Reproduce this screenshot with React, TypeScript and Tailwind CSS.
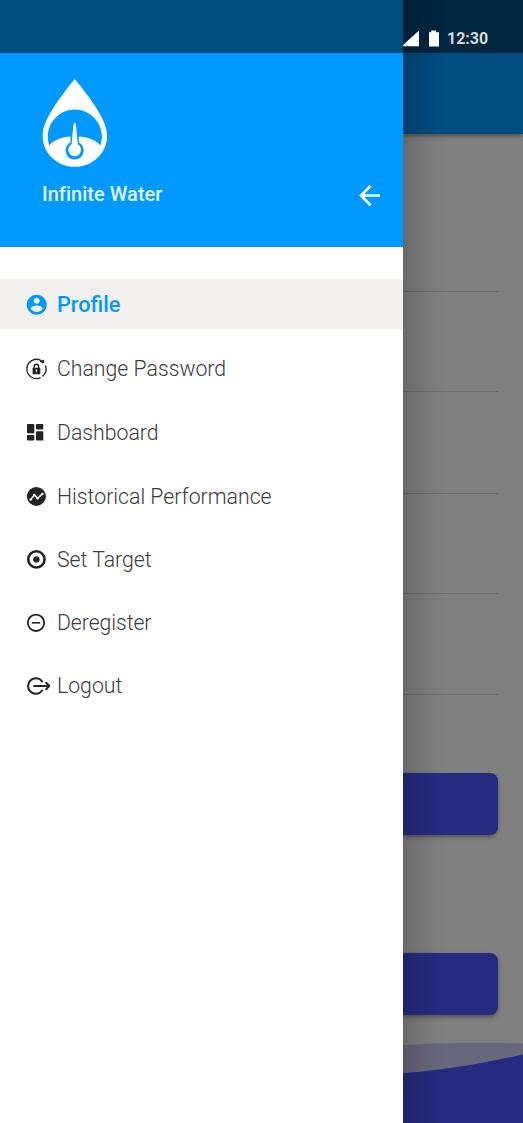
import type { ReactNode } from "react";

function Icon({ children, className = "" }: { children: ReactNode; className?: string }) {
  return (
    <svg viewBox="0 0 28 28" className={`h-7 w-7 shrink-0 ${className}`} fill="none">
      {children}
    </svg>
  );
}

const ink = "#232323";

const icons = {
  profile: (
    <Icon>
      <path
        fill="#0398ff"
        transform="translate(2.7 2.7)"
        d="M12 2C6.48 2 2 6.48 2 12s4.48 10 10 10 10-4.48 10-10S17.52 2 12 2zm0 3c1.66 0 3 1.34 3 3s-1.34 3-3 3-3-1.34-3-3 1.34-3 3-3zm0 14.2c-2.5 0-4.71-1.28-6-3.22.03-1.99 4-3.08 6-3.08 1.99 0 5.97 1.09 6 3.08-1.29 1.94-3.5 3.22-6 3.22z"
      />
    </Icon>
  ),
  password: (
    <Icon>
      <path d="M19.2 5.6A9.6 9.6 0 1 0 18.6 22.6" stroke={ink} strokeWidth="1.3" />
      <path d="M20.4 21.5A9.6 9.6 0 0 0 23.4 10.6" stroke={ink} strokeWidth="1.3" />
      <path d="M18.2 6.6L21.4 5L21.6 8Z" fill={ink} stroke={ink} strokeWidth="1" />
      <rect x="10.6" y="12.8" width="7.7" height="6.5" rx="0.7" fill={ink} />
      <path d="M12.2 13.3V11.5a2.2 2.2 0 0 1 4.4 0V13.3" stroke={ink} strokeWidth="1.4" />
      <path d="M14.4 14.6v2.8M13.6 15.2h1.6" stroke="white" strokeWidth="0.9" />
    </Icon>
  ),
  dashboard: (
    <Icon>
      <g fill={ink}>
        <rect x="5" y="6" width="7.3" height="9.2" rx="0.8" />
        <rect x="14" y="6" width="7.3" height="5.4" rx="0.8" />
        <rect x="5" y="17.1" width="7.3" height="5.5" rx="0.8" />
        <rect x="14" y="13.3" width="7.3" height="9.3" rx="0.8" />
      </g>
    </Icon>
  ),
  history: (
    <Icon>
      <circle cx="14.4" cy="14.4" r="9.5" fill={ink} />
      <path d="M8.7 17.6L12.3 13L15.6 16.3L20.4 11.9" stroke="white" strokeWidth="1.5" />
      <g fill="white">
        <circle cx="8.7" cy="17.6" r="1.2" />
        <circle cx="12.3" cy="13" r="1.2" />
        <circle cx="15.6" cy="16.3" r="1.2" />
        <circle cx="20.4" cy="11.9" r="1.2" />
      </g>
    </Icon>
  ),
  target: (
    <Icon>
      <circle cx="14.4" cy="14.4" r="8.15" stroke={ink} strokeWidth="2.6" />
      <circle cx="14.4" cy="14.4" r="3.2" fill={ink} />
    </Icon>
  ),
  deregister: (
    <Icon>
      <circle cx="14" cy="13.8" r="8.2" stroke={ink} strokeWidth="1.8" />
      <path d="M9.8 13.8h8.4" stroke={ink} strokeWidth="1.6" />
    </Icon>
  ),
  logout: (
    <Icon>
      <path d="M20.2 9.5A7.8 7.8 0 1 0 20.2 18.5" stroke={ink} strokeWidth="2.1" strokeLinecap="round" />
      <path d="M12 14h15" stroke={ink} strokeWidth="1.9" strokeLinecap="round" />
      <path d="M24.2 10.8L27.3 14L24.2 17.2" stroke={ink} strokeWidth="2" strokeLinecap="round" />
    </Icon>
  ),
};

const items = [
  { label: "Profile", icon: icons.profile, row: "bg-[#f1f0ef] font-medium text-[#0398ff]", text: "pt-px text-[21.7px]" },
  { label: "Change Password", icon: icons.password, row: "mt-[15px]", text: "" },
  { label: "Dashboard", icon: icons.dashboard, row: "mt-[13px]", text: "pt-px" },
  { label: "Historical Performance", icon: icons.history, row: "mt-[14px]", text: "pt-px" },
  { label: "Set Target", icon: icons.target, row: "mt-[13px]", text: "pt-px" },
  { label: "Deregister", icon: icons.deregister, row: "mt-[14px]", text: "tracking-[-0.08px]" },
  { label: "Logout", icon: icons.logout, row: "mt-[13px]", text: "" },
];

function Logo() {
  return (
    <svg viewBox="0 0 66 90" className="h-[90px] w-[66px]" fill="none">
      <path d="M32.7 .8C25 11.5 0.6 39 0.6 57.5C0.6 75.4 15 88.8 32.8 88.8S65.1 75.4 65.1 57.5C65.1 39 40.6 11.5 32.7 .8Z" fill="white" />
      <path d="M7.3 68A27 27 0 1 1 58.3 68C53.5 62.5 45.5 59.7 36.8 59.2V65.1A9 9 0 1 1 28.5 65.1V59.2C20 59.7 12.1 62.5 7.3 68Z" fill="#0099ff" transform="translate(0 -0.6)" />
      <path d="M32.7 44.4Q31.6 44.4 31.3 48L29.6 66.2A6.4 6.4 0 1 0 35.8 66.2L34.1 48Q33.8 44.4 32.7 44.4Z" fill="white" />
    </svg>
  );
}

function Drawer() {
  return (
    <aside className="flex w-[403px] shrink-0 flex-col bg-white">
      <div className="h-[53px] bg-[#004d80]" />
      <header className="flex h-[194px] flex-col bg-[#0099ff] pl-[42px] pt-[25px]">
        <Logo />
        <div className="flex h-[52px] items-center justify-between pr-[22px]">
          <h1 className="text-[20px] font-medium leading-6 tracking-[0.03px] text-[#e0f2ff]">Infinite Water</h1>
          <svg viewBox="0 0 24 24" className="mt-[3px] h-6 w-6" fill="none" stroke="white" strokeWidth="2.6">
            <path d="M3.5 11.5H23M13.6 1.8L4 11.5L13.6 21.3" />
          </svg>
        </div>
      </header>
      <nav className="mt-8 flex flex-col text-[21.25px] font-light text-[#3b3b3b]">
        {items.map((item) => (
          <a key={item.label} className={`flex h-[50px] items-center pl-[22px] ${item.row}`}>
            {item.icon}
            <span className={`ml-[7px] whitespace-nowrap leading-[26px] ${item.text}`}>{item.label}</span>
          </a>
        ))}
      </nav>
    </aside>
  );
}

function DimmedPage() {
  return (
    <main className="relative flex w-[120px] flex-col overflow-hidden bg-[#808080]">
      <div className="flex h-[53px] items-end bg-[#002640] pb-[5px]">
        <svg viewBox="0 0 37 20" className="relative z-10 h-5 w-[37px]" fill="white">
          <path d="M0 18.3V17L16 2.4V18.3Z" />
          <path d="M26 4.2H28.3V2.5H33.2V4.2H36V18.5H26Z" />
        </svg>
        <span className="ml-[7px] translate-y-px text-[16px] font-bold leading-5 text-[#d9dcdf]">12:30</span>
      </div>
      <div className="h-[81px] bg-[#004d80] shadow-[0_2px_4px_rgba(0,0,0,0.4)]" />
      <div className="mr-[25px] h-[158px] border-b border-[#6a6a6a]" />
      <div className="mr-[25px] h-[100px] border-b border-[#6a6a6a]" />
      <div className="mr-[25px] h-[102px] border-b border-[#6a6a6a]" />
      <div className="mr-[25px] h-[100px] border-b border-[#6a6a6a]" />
      <div className="mr-[25px] h-[101px] border-b border-[#6a6a6a]" />
      <div className="mr-[25px] mt-[78px] h-[62px] rounded-r-[8px] bg-[#252c80] shadow-[0_2px_4px_rgba(0,0,0,0.35)]" />
      <div className="mr-[25px] mt-[118px] h-[62px] rounded-r-[8px] bg-[#252c80] shadow-[0_2px_4px_rgba(0,0,0,0.35)]" />
      <svg viewBox="0 0 120 80" className="mt-auto h-20 w-[120px]">
        <path d="M0 2Q60 -1.5 120 .5V60H0Z" fill="#69677b" />
        <path d="M0 30.2Q50 27 120 11.5V80H0Z" fill="#252c80" />
      </svg>
      <div className="absolute inset-y-0 left-0 w-[42px] bg-linear-to-r from-black/18 via-black/7 to-transparent" />
    </main>
  );
}

export default function App() {
  return (
    <div className="flex h-[1123px] w-[523px] overflow-hidden font-['Roboto',sans-serif]">
      <Drawer />
      <DimmedPage />
    </div>
  );
}
